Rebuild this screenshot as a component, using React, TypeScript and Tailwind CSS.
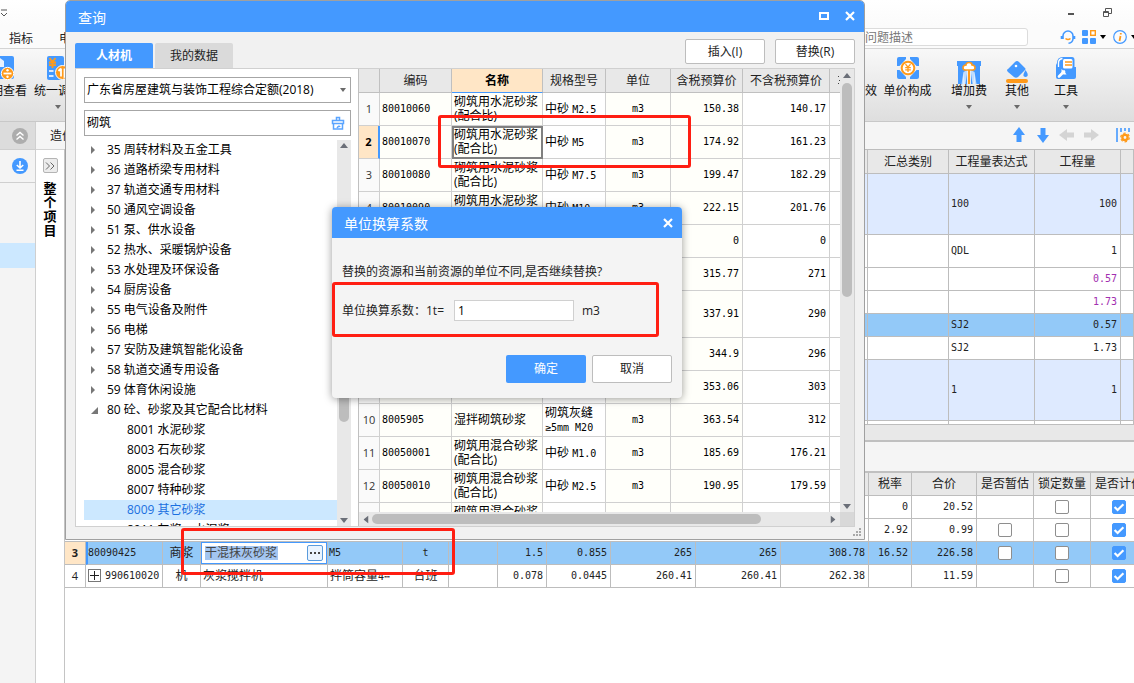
import React from "react";
import clsx from "clsx";

const UI_FONT = "font-['Open_Sans','Noto_Sans_CJK_SC',sans-serif]";
const NUM = "font-['DejaVu_Sans_Mono','Noto_Sans_CJK_SC',monospace] text-[10px]";

const treeItems = [
  "35 周转材料及五金工具",
  "36 道路桥梁专用材料",
  "37 轨道交通专用材料",
  "50 通风空调设备",
  "51 泵、供水设备",
  "52 热水、采暖锅炉设备",
  "53 水处理及环保设备",
  "54 厨房设备",
  "55 电气设备及附件",
  "56 电梯",
  "57 安防及建筑智能化设备",
  "58 轨道交通专用设备",
  "59 体育休闲设施",
];

const treeChildren = [
  "8001 水泥砂浆",
  "8003 石灰砂浆",
  "8005 混合砂浆",
  "8007 特种砂浆",
  "8009 其它砂浆",
  "8011 灰浆、水泥浆",
];

interface Material {
  code: string;
  name: string[];
  spec: [string, string];
  taxed: string;
  untaxed: string;
  tall?: boolean;
}

const cement = ["砌筑用水泥砂浆", "(配合比)"];
const mixed = ["砌筑用混合砂浆", "(配合比)"];

const materials: Material[] = [
  { code: "80010060", name: cement, spec: ["中砂", "M2.5"], taxed: "150.38", untaxed: "140.17" },
  { code: "80010070", name: cement, spec: ["中砂", "M5"], taxed: "174.92", untaxed: "161.23" },
  { code: "80010080", name: cement, spec: ["中砂", "M7.5"], taxed: "199.47", untaxed: "182.29" },
  { code: "80010090", name: cement, spec: ["中砂", "M10"], taxed: "222.15", untaxed: "201.76" },
  { code: "", name: [], spec: ["", ""], taxed: "0", untaxed: "0" },
  { code: "", name: [], spec: ["", ""], taxed: "315.77", untaxed: "271" },
  { code: "", name: [], spec: ["", ""], taxed: "337.91", untaxed: "290", tall: true },
  { code: "", name: [], spec: ["", ""], taxed: "344.9", untaxed: "296" },
  { code: "", name: [], spec: ["", ""], taxed: "353.06", untaxed: "303" },
  { code: "8005905", name: ["湿拌砌筑砂浆"], spec: ["砌筑灰缝", "≥5mm M20"], taxed: "363.54", untaxed: "312" },
  { code: "80050001", name: mixed, spec: ["中砂", "M1.0"], taxed: "185.69", untaxed: "176.21" },
  { code: "80050010", name: mixed, spec: ["中砂", "M2.5"], taxed: "190.95", untaxed: "179.59" },
  { code: "", name: mixed, spec: ["", ""], taxed: "", untaxed: "" },
];

const quantities = [
  { expr: "100", qty: "100", row: "h-[61px] bg-[#deeaff]" },
  { expr: "QDL", qty: "1", row: "h-[33px] bg-white" },
  { expr: "", qty: "0.57", row: "h-[23px] bg-white", purple: true },
  { expr: "", qty: "1.73", row: "h-[23px] bg-white", purple: true },
  { expr: "SJ2", qty: "0.57", row: "h-[23px] bg-[#93c9f8]" },
  { expr: "SJ2", qty: "1.73", row: "h-[23px] bg-white" },
  { expr: "1", qty: "1", row: "h-[61px] bg-[#deeaff]" },
  { expr: "", qty: "", row: "h-[4px] bg-white" },
];

const Caret = ({ className }: { className?: string }) => (
  <svg viewBox="0 0 6 4" className={clsx("w-[6px] h-[4px]", className)} fill="currentColor">
    <path d="M0 0h6L3 4z" />
  </svg>
);

const ScrollArrow = ({ className }: { className?: string }) => (
  <svg viewBox="0 0 8 5" className={clsx("w-[8px] h-[5px] shrink-0 text-[#6b6f78]", className)} fill="currentColor">
    <path d="M0 0h8L4 5z" />
  </svg>
);

const CloseIcon = () => (
  <svg viewBox="0 0 10 10" className="size-[10px]" stroke="currentColor" strokeWidth="2.2">
    <path d="M1 1l8 8M9 1L1 9" />
  </svg>
);

const Check = ({ label, checked }: { label: string; checked?: boolean }) => (
  <span className="relative block size-[14px] mx-auto">
    <input
      type="checkbox"
      aria-label={label}
      defaultChecked={checked}
      className="peer block appearance-none size-[14px] rounded-[2px] border border-[#8e8e8e] bg-white checked:bg-[#4499ff] checked:border-[#4499ff]"
    />
    <svg
      viewBox="0 0 14 14"
      className="absolute inset-0 size-[14px] hidden peer-checked:block pointer-events-none"
      fill="none"
      stroke="white"
      strokeWidth="2.2"
    >
      <path d="M2.6 7l3 3L11.4 4.2" />
    </svg>
  </span>
);

/* ---------- ribbon icons ---------- */
const SwapViewIcon = () => (
  <svg viewBox="0 0 26 24" className="w-[26px] h-[24px] shrink-0">
    <rect x="1" y="0" width="25" height="23" rx="2" fill="#4499ff" />
    <path d="M8 4l4-2 4 3v6H8z" fill="#e8f2ff" />
    <circle cx="19.5" cy="17.5" r="6.2" fill="#ff9a1a" stroke="#fff" strokeWidth="1" />
    <path d="M15.5 17.5h8" stroke="#fff" strokeWidth="1.8" />
    <circle cx="19.5" cy="14.3" r="1.2" fill="#fff" />
    <circle cx="19.5" cy="20.7" r="1.2" fill="#fff" />
  </svg>
);

const UnifyIcon = () => (
  <svg viewBox="0 0 24 24" className="w-[24px] h-[24px] shrink-0">
    <rect x="1" y="0" width="17" height="24" rx="2" fill="#4499ff" />
    <path d="M3.5 2l3 4 3-4M6.5 6v6M3 6.5h7M3 9.2h7" fill="none" stroke="#ff9a1a" strokeWidth="1.8" />
    <path d="M3 15h4.500M3 20h4.500" stroke="#d6e8ff" strokeWidth="2" />
    <circle cx="16.5" cy="16.5" r="7" fill="#ff9a1a" stroke="#fff" strokeWidth="1" />
    <path d="M15 12.5v8M12.5 15l2.5-2.5M18.5 12.5v8l2.500-2.500" fill="none" stroke="#fff" strokeWidth="1.8" />
  </svg>
);

const PriceIcon = () => (
  <svg viewBox="0 0 24 24" className="size-[24px]">
    <path
      d="M1 3a2 2 0 012-2h7v2L3.500 10H1zM14 1h7a2 2 0 012 2v7h-2.500L14 3zM23 14v7a2 2 0 01-2 2h-7v-2l6.500-7zM10 23H3a2 2 0 01-2-2v-7h2.500L10 21z"
      fill="#4499ff"
    />
    <circle cx="12" cy="12" r="6.3" fill="#fff" stroke="#ff9a1a" strokeWidth="2" />
    <path d="M9.5 8.2l2.5 3 2.5-3M12 11v5M9.2 11.6h5.6M9.2 13.8h5.6" fill="none" stroke="#ff9a1a" strokeWidth="1.3" />
  </svg>
);

const ExtraFeeIcon = () => (
  <svg viewBox="0 0 26 24" className="w-[26px] h-[24px]">
    <path d="M1 1h24v5h-1v18h-5V12l-2 12h-2V10h-4v14H9L7 12v12H2V6H1z" fill="#4499ff" />
    <path d="M7.5 12L5.5 24h4l2-14zM18.5 12l2 12h-4l-2-14z" fill="#dfeeff" opacity="0.8" />
    <path
      d="M13 2.5c2 0 3 1.2 3 2.5 2 0 3 1.2 3 2.7S18 10 16.5 10h-7C8 10 7 9.2 7 7.7S8 5 10 5c0-1.3 1-2.5 3-2.500z"
      fill="#fff"
      stroke="#ff9a1a"
      strokeWidth="1.6"
    />
    <path d="M13 10v14" stroke="#ff9a1a" strokeWidth="2" />
  </svg>
);

const OtherIcon = () => (
  <svg viewBox="0 0 24 24" className="size-[24px]">
    <path d="M10 2q2-2 4 0l6 6q1 1 0 2l-7 7q-2 1.500-4 0l-6-5q-2-2 0-3z" fill="#4499ff" />
    <circle cx="11" cy="6" r="1.300" fill="#fff" />
    <path d="M20.500 10q3 4 2 6-2 2-4 0-.5-2 2-6z" fill="#4499ff" />
    <rect x="1" y="19" width="22" height="4" rx="2" fill="#ff9a1a" />
  </svg>
);

const ToolIcon = () => (
  <svg viewBox="0 0 22 24" className="w-[22px] h-[24px]">
    <path d="M2 7q0-6 6-6h9q2.500 0 2.500 3v7H21v10a2 2 0 01-2 2H3a2 2 0 01-2-2V9z" fill="#4499ff" />
    <path d="M3.500 11V7q0-4 4-4.500" fill="none" stroke="#fff" strokeWidth="1.300" />
    <rect x="8" y="3" width="9.500" height="9.500" rx="1.500" fill="#fff" />
    <path d="M10 6h7M10 9h7" stroke="#ff9a1a" strokeWidth="1.600" />
    <path d="M4 20.500l5-5" stroke="#fff" strokeWidth="2.600" strokeLinecap="round" />
    <path d="M6.500 13v3.500l2 2h3l-1.500-2.200z" fill="#fff" />
  </svg>
);

const RibbonItem = ({
  label,
  icon,
  caret,
  className,
}: {
  label: string;
  icon?: React.ReactNode;
  caret?: boolean;
  className?: string;
}) => (
  <button className={clsx("flex flex-col items-center shrink-0 pt-[7px] whitespace-nowrap", className)}>
    <span className="h-[26px] flex justify-center">{icon}</span>
    <span className="leading-[18px]">{label}</span>
    {caret && <Caret className="mt-[5px] text-[#6a6a6a]" />}
  </button>
);

const ArrowIcon = ({ rotate, color }: { rotate: string; color: string }) => (
  <svg viewBox="0 0 16 16" className={clsx("size-4", rotate, color)} fill="currentColor">
    <path d="M8 0l6 8h-3.5v7h-5V8H2z" />
  </svg>
);

const AppHeader = () => (
  <header>
    <div className="h-[26px] flex items-center bg-gradient-to-b from-white to-[#fbfbfb] text-[#555]">
      <svg viewBox="0 0 8 8" className="size-2" fill="none" stroke="currentColor">
        <path d="M1 1h6M1 4l3 3 3-3" />
      </svg>
      <div className="ml-auto flex items-center gap-[28px] pr-[22px] pb-[2px]">
        <button aria-label="最小化">
          <svg viewBox="0 0 8 8" className="size-2" stroke="currentColor" strokeWidth="2">
            <path d="M1 6h6" />
          </svg>
        </button>
        <button aria-label="还原">
          <svg viewBox="0 0 9 9" className="size-[9px]" fill="none" stroke="currentColor">
            <path d="M.5 3.5h5v5h-5zM2.5 3.500v-3h6v5h-3M.5 4.5h5" />
          </svg>
        </button>
      </div>
    </div>
    <nav className="h-[23px] flex items-center bg-[#fbfbfb] border-b border-[#d4d4d4] pl-[9px] text-[#222]">
      <button className="w-[50px] text-left pt-[3px]">指标</button>
      <button className="pt-[3px]">电</button>
      <input
        aria-label="问题描述"
        placeholder="问题描述"
        className="ml-auto w-[170px] h-[18px] pl-[6px] rounded-[3px] border border-[#dcdcdc] bg-white placeholder:text-[#777] outline-none"
      />
      <div className="flex items-center pl-8 pr-px text-[#4499ff]">
        <svg viewBox="0 0 16 16" className="size-4 mr-[6px]" fill="none" stroke="currentColor" strokeWidth="1.6">
          <path d="M3 10V7a5 5 0 0110 0v3M1.5 7v3M14.5 7v3M13 10q-.5 4-4.5 4.3" />
          <path d="M5.5 9.5q2.5 2 5 0" stroke="#ff9a1a" />
        </svg>
        <svg viewBox="0 0 14 14" className="size-[14px]" fill="currentColor">
          <rect width="6" height="6" rx="1" />
          <rect x="8.7" y=".7" width="4.6" height="4.6" fill="#fff" stroke="#ff9a1a" strokeWidth="1.4" />
          <rect y="8" width="6" height="6" rx="1" />
          <rect x="8" y="8" width="6" height="6" rx="1" />
        </svg>
        <Caret className="ml-[4px] text-black" />
        <svg viewBox="0 0 14 14" className="size-[14px] ml-[7px]" fill="none" stroke="currentColor">
          <circle cx="7" cy="7" r="6.3" strokeWidth="1.2" />
          <path d="M7.8 3v1.6M7.5 6l-1 5" stroke="#ff9a1a" strokeWidth="1.8" />
        </svg>
        <Caret className="ml-[4px] text-black -mr-[4px]" />
      </div>
    </nav>
    <div className="h-[73px] flex items-start bg-gradient-to-b from-[#f8f8f8] to-[#dedede] border-b border-[#c8c8c8] text-[#111] overflow-hidden">
      <RibbonItem label="明查看" icon={<span className="pr-4"><SwapViewIcon /></span>} className="-ml-[9px] w-[36px]" />
      <RibbonItem label="统一调价" icon={<UnifyIcon />} caret className="w-[62px]" />
      <div className="ml-auto flex pr-9">
        <RibbonItem label="效" />
        <RibbonItem label="单价构成" icon={<PriceIcon />} className="w-[61px]" />
        <RibbonItem label="增加费" icon={<span className="pt-[4px]"><ExtraFeeIcon /></span>} caret className="w-[62px]" />
        <RibbonItem label="其他" icon={<span className="pt-[4px]"><OtherIcon /></span>} caret className="w-[34px]" />
        <RibbonItem label="工具" icon={<ToolIcon />} caret className="w-[64px]" />
      </div>
    </div>
  </header>
);

const Sidebar = () => (
  <aside className="w-[36px] shrink-0 bg-[#f4f4f4] border-r border-[#cfcfcf] flex flex-col">
    <button aria-label="收起" className="h-[28px] pl-[4px] flex-none grid place-items-center bg-[#dcdcdc] border-b border-[#cfcfcf]">
      <svg viewBox="0 0 16 16" className="size-4" fill="none" stroke="#fff" strokeWidth="1.4">
        <circle cx="8" cy="8" r="8" fill="#adadad" stroke="none" />
        <path d="M4.5 7.5L8 4.5l3.5 3M4.5 11.5L8 8.5l3.5 3" />
      </svg>
    </button>
    <button aria-label="下载" className="h-[33px] pl-[4px] flex-none grid place-items-center border-b border-[#cfcfcf]">
      <svg viewBox="0 0 16 16" className="size-4" fill="none" stroke="#fff" strokeWidth="1.6">
        <circle cx="8" cy="8" r="8" fill="#4499ff" stroke="none" />
        <path d="M8 3v6.5M4.8 7L8 10l3.2-3M4.5 12.3h7" />
      </svg>
    </button>
    <div className="mt-[60px] h-[25px] bg-[#cce8ff]" />
  </aside>
);

const th = "border-r border-b border-[#bdbdbd] bg-[#e8e8e8] font-normal p-0 whitespace-nowrap overflow-hidden";
const td = "border-r border-b border-[#bdbdbd] p-0 whitespace-nowrap overflow-hidden";

const QuantityTable = () => (
  <table className="w-full table-fixed border-separate border-spacing-0 border-t border-[#bdbdbd] text-[#222]">
    <colgroup>
      <col className="w-[803px]" />
      <col className="w-[81px]" />
      <col className="w-[86px]" />
      <col className="w-[86px]" />
      <col />
    </colgroup>
    <thead>
      <tr className="h-[24px]">
        <th className={th} />
        <th className={th}>汇总类别</th>
        <th className={th}>工程量表达式</th>
        <th className={th}>工程量</th>
        <th className={th} />
      </tr>
    </thead>
    <tbody>
      {quantities.map((q, i) => (
        <tr key={i} className={q.row}>
          <td className={td} />
          <td className={td} />
          <td className={clsx(td, NUM, "pl-[2px] leading-none")}>{q.expr}</td>
          <td className={clsx(td, NUM, "pr-[3px] text-right leading-none", q.purple && "text-[#a22fb0]")}>{q.qty}</td>
          <td className={td} />
        </tr>
      ))}
    </tbody>
  </table>
);

const numCell = clsx(td, NUM, "text-right pr-[3px]");

const ResourceTable = () => (
  <table className="w-full table-fixed border-separate border-spacing-0 text-[#222]">
    <colgroup>
      <col className="w-[21px]" />
      <col className="w-[77px]" />
      <col className="w-[38px]" />
      <col className="w-[127px]" />
      <col className="w-[75px]" />
      <col className="w-[46px]" />
      <col className="w-[49px]" />
      <col className="w-[49px]" />
      <col className="w-[64px]" />
      <col className="w-[85px]" />
      <col className="w-[85px]" />
      <col className="w-[88px]" />
      <col className="w-[43px]" />
      <col className="w-[65px]" />
      <col className="w-[57px]" />
      <col className="w-[57px]" />
      <col className="w-[57px]" />
    </colgroup>
    <thead>
      <tr className="h-[23px]">
        <th className={th} colSpan={12} />
        <th className={th}>税率</th>
        <th className={th}>合价</th>
        <th className={th}>是否暂估</th>
        <th className={th}>锁定数量</th>
        <th className={th}>是否计价</th>
      </tr>
    </thead>
    <tbody>
      <tr className="h-[23px]">
        <td className={td} colSpan={12} />
        <td className={numCell}>0</td>
        <td className={numCell}>20.52</td>
        <td className={td} />
        <td className={td}><Check label="锁定数量 1" /></td>
        <td className={td}><Check label="是否计价 1" checked /></td>
      </tr>
      <tr className="h-[23px]">
        <td className={td} colSpan={12} />
        <td className={numCell}>2.92</td>
        <td className={numCell}>0.99</td>
        <td className={td}><Check label="是否暂估 2" /></td>
        <td className={td}><Check label="锁定数量 2" /></td>
        <td className={td}><Check label="是否计价 2" checked /></td>
      </tr>
      <tr className="h-[23px] bg-[#93c9f8]">
        <td className={clsx(td, "bg-[#ffe6c6] text-center font-bold text-[11px]")}>3</td>
        <td className={clsx(td, NUM, "border-l-2 border-l-[#4499ff]")}>80090425</td>
        <td className={clsx(td, "text-center")}>商浆</td>
        <td className={clsx(td, "bg-white")}>
          <div className="flex items-center h-[22px] border border-[#4499ff] pl-[3px] pr-[3px]">
            <input
              aria-label="名称"
              defaultValue="干混抹灰砂浆"
              className="w-[73px] h-[14px] leading-[14px] bg-[#a3c5f0] text-[#444] outline-none"
            />
            <button
              aria-label="选择材料"
              className="ml-auto w-[16px] h-[16px] grid place-items-center rounded-[2px] border border-[#5a9bdc] bg-[#eaf4ff]"
            >
              <svg viewBox="0 0 10 2" className="w-[10px] h-[2px]" fill="#444">
                <path d="M0 0h2v2H0zM4 0h2v2H4zM8 0h2v2H8z" />
              </svg>
            </button>
          </div>
        </td>
        <td className={clsx(td, NUM, "pl-px")}>M5</td>
        <td className={clsx(td, NUM, "text-center")}>t</td>
        <td className={td} />
        <td className={numCell}>1.5</td>
        <td className={numCell}>0.855</td>
        <td className={numCell}>265</td>
        <td className={numCell}>265</td>
        <td className={numCell}>308.78</td>
        <td className={numCell}>16.52</td>
        <td className={numCell}>226.58</td>
        <td className={td}><Check label="是否暂估 3" /></td>
        <td className={td}><Check label="锁定数量 3" /></td>
        <td className={td}><Check label="是否计价 3" checked /></td>
      </tr>
      <tr className="h-[23px]">
        <td className={clsx(td, "text-center text-[11px]")}>4</td>
        <td className={clsx(td, NUM)}>
          <div className="flex items-center gap-[4px] pl-[2px]">
            <button aria-label="展开" className="size-[13px] grid place-items-center border border-[#777]">
              <svg viewBox="0 0 9 9" className="size-[9px]" stroke="#222">
                <path d="M0 4.5h9M4.5 0v9" />
              </svg>
            </button>
            990610020
          </div>
        </td>
        <td className={clsx(td, "text-center")}>机</td>
        <td className={clsx(td, "pl-[2px]")}>灰浆搅拌机</td>
        <td className={clsx(td, "pl-[2px]")}>拌筒容量<span className={NUM}>4⋯</span></td>
        <td className={clsx(td, "text-center")}>台班</td>
        <td className={td} />
        <td className={numCell}>0.078</td>
        <td className={numCell}>0.0445</td>
        <td className={numCell}>260.41</td>
        <td className={numCell}>260.41</td>
        <td className={numCell}>262.38</td>
        <td className={td} />
        <td className={numCell}>11.59</td>
        <td className={td} />
        <td className={td}><Check label="锁定数量 4" /></td>
        <td className={td}><Check label="是否计价 4" checked /></td>
      </tr>
    </tbody>
  </table>
);

const Tree = () => (
  <div className="flex flex-1 min-h-0">
    <ul className="flex-1 overflow-hidden text-black leading-[20px]">
      {treeItems.map((t) => (
        <li key={t} className="h-5 flex items-center pl-[7px]">
          <svg viewBox="0 0 4 8" className="w-[4px] h-[8px] mr-[12px]" fill="#777">
            <path d="M0 0l4 4-4 4z" />
          </svg>
          {t}
        </li>
      ))}
      <li className="h-5 flex items-center pl-[7px]">
        <svg viewBox="0 0 7 7" className="size-[7px] mr-[9px]" fill="#777">
          <path d="M7 0v7H0z" />
        </svg>
        80 砼、砂浆及其它配合比材料
      </li>
      {treeChildren.map((t) => (
        <li key={t} className={clsx("h-5 pl-[43px]", t.startsWith("8009") && "bg-[#cce8ff] text-[#1a6fe0]")}>
          {t}
        </li>
      ))}
    </ul>
    <div className="w-[14px] bg-[#e8e8e8] flex flex-col items-center py-[3px]">
      <ScrollArrow className="rotate-180" />
      <div className="mt-[170px] w-[10px] h-[104px] rounded-full bg-[#bdbdbd]" />
      <ScrollArrow className="mt-auto" />
    </div>
  </div>
);

const mth = "border-r border-b border-[#c0c0c0] bg-[#e8e8e8] font-normal p-0 whitespace-nowrap overflow-hidden text-[#222]";
const mtd = "border-r border-b border-[#d0d0d0] p-0 overflow-hidden leading-[14px]";
const ivory = "bg-[#fffffa]";

const MaterialTable = () => (
  <table className="w-full table-fixed border-separate border-spacing-0 bg-white text-black">
    <colgroup>
      <col className="w-[21px]" />
      <col className="w-[72px]" />
      <col className="w-[91px]" />
      <col className="w-[63px]" />
      <col className="w-[65px]" />
      <col className="w-[72px]" />
      <col className="w-[87px]" />
      <col />
    </colgroup>
    <thead>
      <tr className="h-[24px]">
        <th className={mth} />
        <th className={mth}>编码</th>
        <th className="border-r border-r-[#c0c0c0] border-b border-b-[#4499ff] bg-[#ffe6c6] font-bold p-0">名称</th>
        <th className={mth}>规格型号</th>
        <th className={mth}>单位</th>
        <th className={mth}>含税预算价</th>
        <th className={mth}>不含税预算价</th>
        <th className={clsx(mth, "border-r-0")}>
          <svg viewBox="0 0 2 10" className="w-[2px] h-[10px] ml-auto" fill="#444">
            <path d="M0 0h1v1H0zM1 4h1v1H1zM0 7h1v1H0z" />
          </svg>
        </th>
      </tr>
    </thead>
    <tbody>
      {materials.map((m, i) => {
        const active = i === 1;
        return (
          <tr key={i} className={m.tall ? "h-[47px]" : "h-[33px]"}>
            <td
              className={clsx(
                mtd,
                "text-center text-[11px]",
                active ? "bg-[#ffe6c6] font-bold border-r-2 border-r-[#4499ff]" : "bg-[#fafafa] text-[#333]"
              )}
            >
              {i < 12 && i + 1}
            </td>
            <td className={clsx(mtd, NUM, ivory, "pl-[2px]")}>{m.code}</td>
            <td className={clsx(mtd, ivory, "pl-[2px] whitespace-nowrap", active && "outline-2 -outline-offset-2 outline-[#808080]")}>
              {m.name.map((line) => (
                <div key={line}>{line}</div>
              ))}
            </td>
            <td className={clsx(mtd, "pl-[2px] whitespace-nowrap")}>
              {m.spec[0]}
              {m.spec[1].startsWith("≥") ? <br /> : " "}
              <span className={NUM}>{m.spec[1]}</span>
            </td>
            <td className={clsx(mtd, NUM, ivory, "text-center")}>{i < 12 && "m3"}</td>
            <td className={clsx(mtd, NUM, ivory, "text-right pr-[3px]")}>{m.taxed}</td>
            <td className={clsx(mtd, NUM, "text-right pr-[3px]")}>{m.untaxed}</td>
            <td className={clsx(mtd, "border-r-0")} />
          </tr>
        );
      })}
    </tbody>
  </table>
);

const QueryDialog = () => (
  <section
    role="dialog"
    aria-label="查询"
    className="absolute left-[65px] top-0 w-[800px] h-[540px] flex flex-col bg-[#f1f1f1] border border-[#a0a0a0] rounded-t-[5px] overflow-hidden"
  >
    <div className="h-[31px] shrink-0 flex items-center pl-3 pr-[9px] bg-[#4499ff] text-white">
      <h1 className="text-sm pt-[2px]">查询</h1>
      <div className="ml-auto flex items-center gap-[16px] pb-[2px]">
        <button aria-label="最大化">
          <svg viewBox="0 0 10 8" className="w-[10px] h-[8px]" fill="none" stroke="currentColor" strokeWidth="2">
            <path d="M1 1h8v6H1z" />
          </svg>
        </button>
        <button aria-label="关闭"><CloseIcon /></button>
      </div>
    </div>
    <div className="h-[36px] shrink-0 flex items-end gap-[2px] pl-[9px] pr-[9px]">
      <button className="w-[78px] h-[25px] rounded-t-[2px] bg-[#4499ff] text-white font-bold">人材机</button>
      <button className="w-[78px] h-[25px] rounded-t-[2px] bg-[#dadada] text-[#222]">我的数据</button>
      <button className="ml-auto mr-[8px] mb-1 w-[80px] h-[25px] rounded-[2px] border border-[#bdbdbd] bg-white text-[#222]">
        插入(I)
      </button>
      <button className="mb-1 w-[80px] h-[25px] rounded-[2px] border border-[#bdbdbd] bg-white text-[#222]">替换(R)</button>
    </div>
    <div className="flex-1 min-h-0 flex mx-[9px] mb-[12px] border border-[#d0d0d0] bg-white">
      <div className="w-[282px] shrink-0 flex flex-col pl-[8px] pr-[7px] pt-[8px]">
        <div className="relative">
          <select
            aria-label="定额"
            className="w-full h-[26px] pl-[2px] appearance-none border border-[#a6a6a6] bg-white text-black outline-none"
          >
            <option>广东省房屋建筑与装饰工程综合定额(2018)</option>
          </select>
          <Caret className="absolute right-[5px] top-[11px] text-[#6a6a6a] pointer-events-none" />
        </div>
        <div className="mt-[7px] mb-[4px] h-[26px] flex items-center border border-[#a6a6a6] pl-[2px] pr-[5px]">
          <input aria-label="搜索" defaultValue="砌筑" className="flex-1 text-black outline-none" />
          <button aria-label="清空">
            <svg viewBox="0 0 14 14" className="size-[14px]" fill="none" stroke="#5aa4ff" strokeWidth="1.5">
              <path d="M5.5 4V1.5h3V4M1.500 4.5h11v3h-11zM2.500 8v5h9V8" />
              <path d="M6 12q2-3 3-1" />
            </svg>
          </button>
        </div>
        <Tree />
      </div>
      <div className="flex-1 min-w-0 flex flex-col border-l border-[#c0c0c0]">
        <div className="flex-1 min-h-0 flex">
          <div className="flex-1 min-w-0 overflow-hidden">
            <MaterialTable />
          </div>
          <div className="w-[14px] shrink-0 bg-[#e8e8e8] flex flex-col items-center pt-[4px] pb-[3px]">
            <ScrollArrow className="rotate-180" />
            <div className="mt-[5px] w-[10px] h-[214px] rounded-full bg-[#bdbdbd]" />
            <ScrollArrow className="mt-auto" />
          </div>
        </div>
        <div className="h-[14px] shrink-0 flex items-center bg-[#e8e8e8] pl-[3px]">
          <ScrollArrow className="rotate-90" />
          <div className="ml-[2px] w-[389px] h-[10px] rounded-full bg-[#bdbdbd]" />
          <ScrollArrow className="ml-auto mr-[3px] -rotate-90" />
          <div className="w-[14px] h-full bg-[#d8d8d8]" />
        </div>
      </div>
    </div>
    <svg viewBox="0 0 8 8" className="absolute right-[3px] bottom-[3px] size-2" fill="#a8a8a8">
      <path d="M6 0h2v2H6zM3 3h2v2H3zM6 3h2v2H6zM0 6h2v2H0zM3 6h2v2H3zM6 6h2v2H6z" />
    </svg>
  </section>
);

const FactorDialog = () => (
  <section
    role="dialog"
    aria-label="单位换算系数"
    className="absolute left-[332px] top-[207px] w-[350px] bg-[#f4f4f4] rounded-[4px] shadow-[0_1px_8px_rgba(0,0,0,0.4)] overflow-hidden text-[#222]"
  >
    <div className="h-[31px] flex items-center justify-between pl-3 pr-[9px] bg-[#4499ff] text-white">
      <h2 className="text-sm pt-[2px]">单位换算系数</h2>
      <button aria-label="关闭"><CloseIcon /></button>
    </div>
    <div className="px-[10px] pt-[24px] pb-[15px]">
      <p className="leading-[20px]">替换的资源和当前资源的单位不同,是否继续替换?</p>
      <div className="mt-[18px] h-[21px] flex items-center">
        <label htmlFor="factor" className="w-[112px]">单位换算系数：1t=</label>
        <input
          id="factor"
          defaultValue="1"
          className="w-[120px] h-[21px] pl-[3px] border border-[#d0d0d0] bg-white text-black outline-none"
        />
        <span className="ml-2">m3</span>
      </div>
      <div className="mt-[34px] flex justify-end gap-[6px]">
        <button className="w-[80px] h-[28px] rounded-[2px] bg-[#4499ff] text-white">确定</button>
        <button className="w-[80px] h-[28px] rounded-[2px] border border-[#bdbdbd] bg-white">取消</button>
      </div>
    </div>
  </section>
);

const mark = "absolute border-3 border-[#ff1e12] rounded-[3px] pointer-events-none";

const App = () => {
  return (
    <div className={clsx("relative h-screen overflow-hidden flex flex-col bg-white text-xs", UI_FONT)}>
      <AppHeader />
      <div className="flex flex-1 min-h-0">
        <Sidebar />
        <div className="flex-1 min-w-0 flex flex-col">
          <div className="h-[27px] shrink-0 flex items-center bg-[#f5f5f5] pl-[14px] text-[#222]">
            <button>造价</button>
            <div className="ml-auto flex items-center gap-2 pr-[4px] pb-[2px]">
              <button aria-label="上移"><ArrowIcon rotate="" color="text-[#4499ff]" /></button>
              <button aria-label="下移"><ArrowIcon rotate="rotate-180" color="text-[#4499ff]" /></button>
              <button aria-label="左移"><ArrowIcon rotate="-rotate-90" color="text-[#d4d4d4]" /></button>
              <button aria-label="右移"><ArrowIcon rotate="rotate-90" color="text-[#d4d4d4]" /></button>
              <button aria-label="列设置" className="ml-[9px]">
                <svg viewBox="0 0 14 16" className="w-[14px] h-[16px]" fill="none" stroke="#4499ff" strokeWidth="1.6">
                  <path d="M1 1v14M5 1v4M9 1v3M13 1v4" />
                  <circle cx="9" cy="10.5" r="2.600" stroke="#ff9a1a" strokeWidth="2.4" />
                  <circle cx="9" cy="10.5" r="4.300" stroke="#ff9a1a" strokeWidth="1.2" strokeDasharray="2.500 2" />
                </svg>
              </button>
            </div>
          </div>
          <div className="flex flex-1 min-h-0">
            <div className="w-[28px] shrink-0 pt-[8px] flex flex-col items-center border-t border-[#d4d4d4] bg-white">
              <button aria-label="展开项目" className="size-[15px] grid place-items-center rounded-[2px] border border-[#b4b4b4] bg-[#ececec]">
                <svg viewBox="0 0 10 8" className="w-[10px] h-[8px]" fill="none" stroke="#666">
                  <path d="M1 .5L4.5 4 1 7.5M5.5 .5L9 4 5.5 7.5" />
                </svg>
              </button>
              <div className="mt-2 w-[13px] text-[13px] leading-[14px] font-bold text-black break-all">整个项目</div>
            </div>
            <main className="flex-1 min-w-0 border-l border-[#c4c4c4] overflow-hidden">
              <QuantityTable />
              <div className="h-[17px] bg-[#e8e8e8] border-b-2 border-[#c0c0c0]" />
              <div className="h-[31px] bg-[#f5f5f5] border-b-2 border-[#c0c0c0]" />
              <ResourceTable />
            </main>
          </div>
        </div>
      </div>

      <QueryDialog />
      <FactorDialog />

      <div className={clsx(mark, "left-[438px] top-[115px] w-[253px] h-[53px]")} />
      <div className={clsx(mark, "left-[332px] top-[282px] w-[327px] h-[55px]")} />
      <div className={clsx(mark, "left-[181px] top-[528px] w-[274px] h-[47px]")} />
    </div>
  );
};

export default App;
